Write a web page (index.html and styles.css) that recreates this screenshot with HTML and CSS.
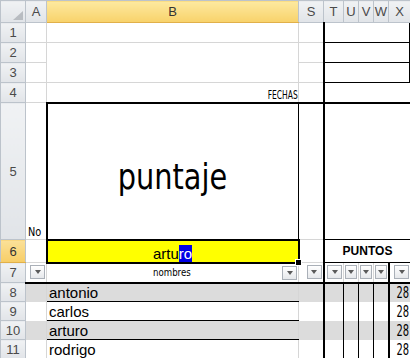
FILE: index.html
```html
<!DOCTYPE html>
<html lang="es">
<head>
    <meta charset="UTF-8">
    <title>puntaje</title>
    <link rel="stylesheet" href="styles.css">
</head>
<body>
    <table class="sheet">
        <colgroup>
            <col class="c-hdr"><col class="c-a"><col class="c-b"><col class="c-s">
            <col class="c-t"><col class="c-n"><col class="c-n"><col class="c-n"><col class="c-x">
        </colgroup>
        <tr class="r-head">
            <th class="corner"><svg width="10" height="9" viewBox="0 0 10 9"><polygon points="10,0 10,9 0,9" fill="#b8bcc1"/></svg></th>
            <th>A</th><th class="sel">B</th><th>S</th><th>T</th><th>U</th><th>V</th><th>W</th><th>X</th>
        </tr>
        <tr class="r20">
            <th class="rh">1</th><td></td><td></td><td class="s"></td><td colspan="5" class="box"></td>
        </tr>
        <tr class="r20">
            <th class="rh">2</th><td></td><td rowspan="2"></td><td class="s"></td><td colspan="5" class="box"></td>
        </tr>
        <tr class="r20">
            <th class="rh">3</th><td></td><td class="s"></td><td colspan="5" class="box"></td>
        </tr>
        <tr class="r20">
            <th class="rh">4</th><td></td>
            <td class="fechas thick-b"><span>FECHAS</span></td>
            <td class="s thick-b"></td>
            <td colspan="5" class="open thick-b"></td>
        </tr>
        <tr class="r137">
            <th class="rh">5</th>
            <td class="no"><span>No</span></td>
            <td class="title"><span>puntaje</span></td>
            <td class="s"></td>
            <td colspan="5" class="side"></td>
        </tr>
        <tr class="r23">
            <th class="rh sel">6</th><td></td>
            <td class="active">artu<span class="hl">ro</span><i class="handle"></i></td>
            <td class="s"></td>
            <td colspan="5" class="puntos">PUNTOS</td>
        </tr>
        <tr class="r20 filters">
            <th class="rh">7</th>
            <td><div class="fc"><span class="flt"></span></div></td>
            <td class="nm"><div class="fc-mid"><span class="lbl">nombres</span><span class="flt"></span></div></td>
            <td class="s"><div class="fc"><span class="flt"></span></div></td>
            <td><div class="fc"><span class="flt"></span></div></td>
            <td><div class="fc"><span class="flt sm"></span></div></td>
            <td><div class="fc"><span class="flt sm"></span></div></td>
            <td><div class="fc"><span class="flt sm"></span></div></td>
            <td class="x"><div class="fc"><span class="flt"></span></div></td>
        </tr>
        <tr class="r19 band">
            <th class="rh">8</th><td class="nl"></td><td class="name">antonio</td>
            <td class="s nl"></td><td class="p"></td><td class="p"></td><td class="p"></td><td class="p"></td>
            <td class="num"><span>28</span></td>
        </tr>
        <tr class="r19">
            <th class="rh">9</th><td class="nl"></td><td class="name">carlos</td>
            <td class="s nl"></td><td class="p"></td><td class="p"></td><td class="p"></td><td class="p"></td>
            <td class="num"><span>28</span></td>
        </tr>
        <tr class="r19 band">
            <th class="rh">10</th><td class="nl"></td><td class="name">arturo</td>
            <td class="s nl"></td><td class="p"></td><td class="p"></td><td class="p"></td><td class="p"></td>
            <td class="num"><span>28</span></td>
        </tr>
        <tr class="r19">
            <th class="rh">11</th><td class="nl"></td><td class="name">rodrigo</td>
            <td class="s nl"></td><td class="p"></td><td class="p"></td><td class="p"></td><td class="p"></td>
            <td class="num"><span>28</span></td>
        </tr>
    </table>
</body>
</html>
```

FILE: styles.css
```css
body {
    margin: 0;
    background: #ffffff;
    font-family: "Liberation Sans", Arial, sans-serif;
    overflow: hidden;
}
.sheet {
    border-collapse: collapse;
    table-layout: fixed;
    width: 410px;
}
.c-hdr { width: 25px; }
.c-a { width: 21px; }
.c-b { width: 252px; }
.c-s { width: 25px; }
.c-t { width: 20px; }
.c-n { width: 15px; }
.c-x { width: 22px; }

.r-head { height: 22px; }
.r20 { height: 20px; }
.r19 { height: 19px; }
.r23 { height: 23px; }
.r137 { height: 137px; }

.sheet th {
    background: linear-gradient(#f0f2f4, #e1e4e8);
    border: 1px solid #bcc3cb;
    color: #4a4a4a;
    font-weight: normal;
    font-size: 13px;
    padding: 0;
    text-align: center;
    vertical-align: middle;
}
.sheet th.sel {
    background: linear-gradient(#fde9a0, #f8d26a);
    border-bottom-color: #e1b04a;
    color: #333333;
}
.sheet th.rh.sel {
    background: linear-gradient(#fbe199, #f7cd66);
}
.sheet th.corner {
    text-align: right;
    vertical-align: bottom;
    padding: 0 2px 2px 0;
    line-height: 0;
}
.sheet td {
    border: 1px solid #d6d6d6;
    padding: 0;
    font-size: 15px;
    line-height: 17px;
    vertical-align: bottom;
    white-space: nowrap;
    overflow: hidden;
}

/* heavy and black borders */
.sheet td.s {
    border-left: 1px solid #000;
    border-right: 2px solid #000;
}
.sheet td.box {
    border: 1px solid #000;
    border-left: 2px solid #000;
    box-shadow: inset -1px 0 #000;
}
.sheet td.open {
    border-top: 1px solid #000;
    border-left: 2px solid #000;
    border-right: 0;
}
.sheet td.thick-b {
    border-bottom: 2px solid #000;
}
.sheet td.side {
    border-left: 2px solid #000;
    border-bottom: 1px solid #000;
    border-right: 0;
}

/* condensed labels */
.fechas {
    text-align: right;
    padding-right: 2px;
}
.fechas span,
.no span,
.title span,
.lbl,
.num span {
    display: inline-block;
    font-family: "DejaVu Sans", sans-serif;
}
.fechas span {
    font-size: 13px;
    line-height: 15px;
    transform: scaleX(0.58);
    transform-origin: right bottom;
}
.sheet td.no {
    padding-left: 2px;
}
.no span {
    font-size: 13px;
    line-height: 15px;
    transform: scaleX(0.75);
    transform-origin: left bottom;
}
.sheet td.title {
    border-left: 2px solid #000;
    border-right: 1px solid #000;
    vertical-align: top;
    text-align: center;
    padding-top: 52px;
}
.title span {
    font-size: 36px;
    line-height: 42px;
    transform: scaleX(0.8);
}

/* active cell */
.sheet td.active {
    position: relative;
    overflow: visible;
    background: #ffff00;
    border: 2px solid #000;
    text-align: center;
    color: #000;
}
.hl {
    background: #0000e6;
    color: #ffffff;
}
.handle {
    position: absolute;
    right: -4px;
    bottom: -4px;
    width: 5px;
    height: 5px;
    background: #000;
    border: 1px solid #fff;
}
.sheet td.puntos {
    border: 1px solid #000;
    border-left: 2px solid #000;
    border-right: 0;
    font-weight: bold;
    font-size: 12px;
    text-align: center;
    vertical-align: middle;
}

/* filter row */
.filters td {
    border-bottom: 2px solid #000;
    vertical-align: middle;
}
.sheet td.nm {
    border-left: 1px solid #000;
}
.fc {
    display: flex;
    justify-content: flex-end;
    align-items: center;
    padding-right: 1px;
}
.fc-mid {
    display: grid;
    grid-template-columns: 1fr auto 1fr;
    align-items: center;
    padding-right: 1px;
}
.fc-mid .lbl {
    grid-column: 2;
    font-size: 10px;
    line-height: 12px;
    transform: scaleX(0.86);
}
.fc-mid .flt {
    grid-column: 3;
    justify-self: end;
}
.flt {
    display: flex;
    justify-content: center;
    align-items: center;
    box-sizing: border-box;
    width: 15px;
    height: 14px;
    background: linear-gradient(#ffffff, #e6e8eb);
    border: 1px solid #aab0b8;
}
.flt.sm {
    width: 12px;
}
.flt::after {
    content: "";
    border-left: 3px solid transparent;
    border-right: 3px solid transparent;
    border-top: 4px solid #5a5a5a;
}

/* data rows */
.band td {
    background: #dcdcdc;
}
.sheet td.nl {
    border-top: none;
    border-bottom: none;
}
.sheet td.name {
    border-left: 1px solid #000;
    border-bottom: 1px solid #000;
    padding-left: 2px;
}
.sheet td.p {
    border-top: none;
    border-bottom: none;
    border-left: 1px solid #000;
    border-right: 1px solid #000;
}
.sheet td.num {
    border-top: none;
    border-bottom: none;
    border-left: 2px solid #000;
    border-right: 0;
    text-align: right;
    padding-right: 3px;
}
.num span {
    font-size: 15px;
    line-height: 17px;
    transform: scaleX(0.66);
    transform-origin: right bottom;
}
.sheet td.x {
    border-left: 2px solid #000;
}
```
